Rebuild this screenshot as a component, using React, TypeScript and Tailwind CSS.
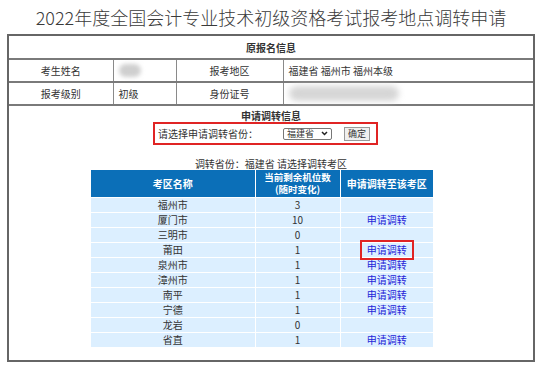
import React from "react";

const rows: { name: string; seats: number; link: boolean; mark?: boolean }[] = [
  { name: "福州市", seats: 3, link: false },
  { name: "厦门市", seats: 10, link: true },
  { name: "三明市", seats: 0, link: false },
  { name: "莆田", seats: 1, link: true, mark: true },
  { name: "泉州市", seats: 1, link: true },
  { name: "漳州市", seats: 1, link: true },
  { name: "南平", seats: 1, link: true },
  { name: "宁德", seats: 1, link: true },
  { name: "龙岩", seats: 0, link: false },
  { name: "省直", seats: 1, link: true },
];

function InfoTable() {
  return (
    <table className="w-full table-fixed border-collapse text-[10px] text-[#333]">
      <colgroup>
        <col className="w-[104px]" />
        <col className="w-[63px]" />
        <col className="w-[107px]" />
        <col />
      </colgroup>
      <tbody>
        <tr className="h-[23px] border-b-2 border-[#7a7a7a]">
          <td colSpan={4} className="text-center font-bold">原报名信息</td>
        </tr>
        <tr className="h-[23px] border-b-2 border-[#7a7a7a]">
          <td className="border-r border-[#8a8a8a] text-center">考生姓名</td>
          <td className="border-r border-[#8a8a8a] px-[5px]">
            <span className="block h-[13px] w-[22px] rounded-full bg-[#cfcfcf] blur-[2px]" />
          </td>
          <td className="border-r border-[#8a8a8a] text-center">报考地区</td>
          <td className="px-[5px]">福建省 福州市 福州本级</td>
        </tr>
        <tr className="h-[23px] border-b-2 border-[#7a7a7a]">
          <td className="border-r border-[#8a8a8a] text-center">报考级别</td>
          <td className="border-r border-[#8a8a8a] px-[5px]">初级</td>
          <td className="border-r border-[#8a8a8a] text-center">身份证号</td>
          <td className="px-[5px]">
            <span className="block h-[15px] w-[110px] rounded-full bg-[#d6d6d6] blur-[3px]" />
          </td>
        </tr>
      </tbody>
    </table>
  );
}

function TransferTable() {
  return (
    <table className="ml-[82px] w-[342px] table-fixed border-collapse text-[10px] text-[#333]">
      <colgroup>
        <col className="w-[164px]" />
        <col className="w-[85px]" />
        <col className="w-[93px]" />
      </colgroup>
      <thead>
        <tr className="h-[27px] bg-[#0b6fb8] font-bold text-white">
          <th className="border-r border-white leading-[13px]">考区名称</th>
          <th className="border-r border-white text-[9.5px] leading-[12.5px]">
            当前剩余机位数
            <br />
            (随时变化)
          </th>
          <th className="leading-[13px]">申请调转至该考区</th>
        </tr>
      </thead>
      <tbody>
        {rows.map((r) => (
          <tr key={r.name} className="h-[15px] border-t border-white bg-[#dcefff] text-center leading-[14px]">
            <td className="border-r border-white">{r.name}</td>
            <td className="border-r border-white">{r.seats}</td>
            <td>
              {r.link && (
                <span className="relative inline-block text-[#2323d8]">
                  申请调转
                  {r.mark && (
                    <span className="absolute -inset-x-[7px] -inset-y-[3px] border-2 border-[#e02424]" />
                  )}
                </span>
              )}
            </td>
          </tr>
        ))}
      </tbody>
    </table>
  );
}

export default function App() {
  return (
    <div
      className="h-[373px] w-[542px] overflow-hidden bg-white"
      style={{ fontFamily: '"Noto Sans CJK SC", "Noto Sans", sans-serif' }}
    >
      <h1 className="flex h-[34px] items-center justify-center text-[18px] font-light text-[#3a3a3a]">
        2022年度全国会计专业技术初级资格考试报考地点调转申请
      </h1>
      <div className="ml-[7px] h-[328px] w-[528px] border-2 border-[#666]">
        <InfoTable />
        <p className="mt-[4px] text-center text-[10px] font-bold leading-[12px] text-[#333]">申请调转信息</p>
        <div className="ml-[144px] flex h-[23px] w-[225px] items-center border-2 border-[#e02424] pl-[3px] text-[10px] text-[#333]">
          <span>请选择申请调转省份：</span>
          <span className="ml-[25px] flex h-[12px] w-[49px] items-center justify-between rounded-[2px] border border-[#777] bg-white px-[3px] text-[9px] leading-none">
            福建省
            <svg width="7" height="5" viewBox="0 0 7 5">
              <path d="M1 1l2.5 2.5L6 1" fill="none" stroke="#222" strokeWidth="1.5" />
            </svg>
          </span>
          <span className="ml-[12px] flex h-[14px] w-[26px] items-center justify-center border border-[#999] bg-[#efefef] text-[9px] leading-none">
            确定
          </span>
        </div>
        <p className="mt-[13px] text-center text-[10px] leading-[12px] text-[#333]">调转省份：福建省 请选择调转考区</p>
        <TransferTable />
      </div>
    </div>
  );
}
